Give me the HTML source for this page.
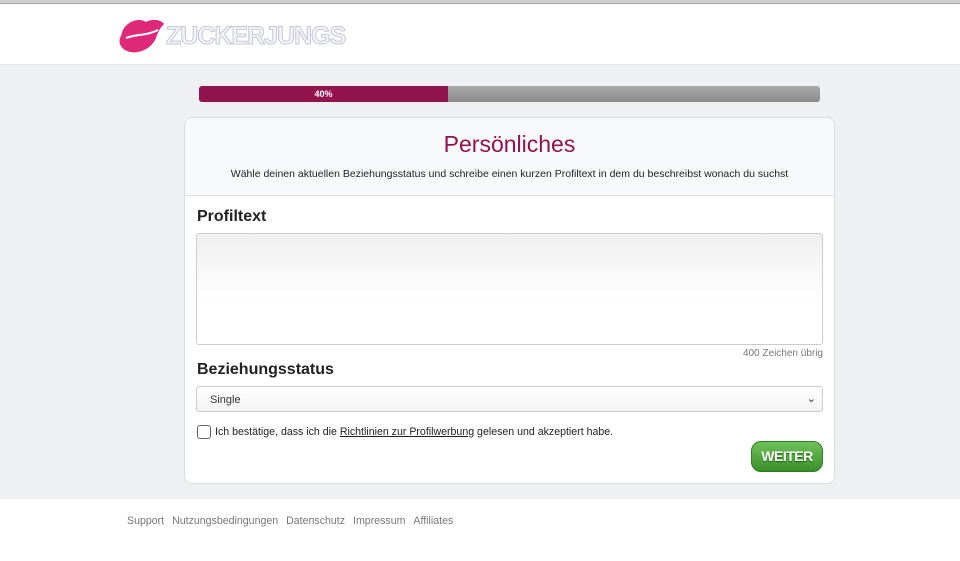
<!DOCTYPE html>
<html><head><meta charset="utf-8"><style>
*{box-sizing:border-box;margin:0;padding:0}
body{width:960px;height:561px;background:#fff;font-family:"Liberation Sans",sans-serif;position:relative;overflow:hidden}
.topline{position:absolute;left:0;top:0;width:960px;height:4px;background:#cfcfcf;border-bottom:1px solid #aaa}
.header{position:absolute;left:0;top:4px;width:960px;height:61px;background:#fff;border-bottom:1px solid #e6e6e6}
.gray{position:absolute;left:0;top:65px;width:960px;height:434px;background:#eff0f2}
.logo{position:absolute;left:118px;top:14px}
.logotext{position:absolute;left:166px;top:18px;font:bold 25px "Liberation Sans",sans-serif;color:#f4f5f8;-webkit-text-stroke:1px #c4c8d4;letter-spacing:-1px}
.prog{position:absolute;left:199px;top:86px;width:621px;height:16px;border-radius:3px;background:linear-gradient(#a8a8a8,#8a8a8a)}
.prog div{width:249px;height:16px;background:#93134f;border-radius:3px 0 0 3px;color:#fff;font:bold 9px "Liberation Sans",sans-serif;text-align:center;line-height:16px}
.card{position:absolute;left:184px;top:117px;width:651px;height:367px;background:#fff;border:1px solid #dcdcdc;border-radius:8px;overflow:hidden}
.ch{height:78px;background:#f8f9fa;border-bottom:1px solid #ddd;text-align:center}
.ch h1{font-weight:normal;font-size:23px;color:#93134f;padding-top:13px}
.ch p{font-size:10.5px;color:#222;margin-top:10px}
.lbl{position:absolute;left:12px;font-weight:bold;font-size:16px;color:#222}
.ta{position:absolute;left:11px;top:115px;width:627px;height:112px;border:1px solid #ccc;border-radius:3px;background:linear-gradient(#efefef,#fff 60%)}
.cnt{position:absolute;right:11px;top:230px;font-size:10px;color:#777}
.sel{position:absolute;left:11px;top:268px;width:627px;height:26px;border:1px solid #ccc;border-radius:3px;background:linear-gradient(#fff,#f3f3f3);font-size:11px;color:#333;padding:7px 13px}
.cb{position:absolute;left:12px;top:307px;width:14px;height:14px;border:1px solid #666;border-radius:3px}
.ct{position:absolute;left:30px;top:308px;font-size:10.6px;color:#222}
.ct u{color:#222}
.btn{position:absolute;left:566px;top:323px;width:72px;height:31px;border-radius:10px;background:linear-gradient(#6fc25a,#3a8f2b);border:1px solid #2f7d24;color:#fff;font-weight:bold;font-size:14px;letter-spacing:-0.5px;text-align:center;line-height:29px;text-shadow:0 1px 1px #1d5a15}
.foot{position:absolute;left:127px;top:515px;font-size:10.6px;color:#777}
.foot span{margin-right:8px}
</style></head><body>
<div class="topline"></div>
<div class="header">
<svg class="logo" width="46" height="36" viewBox="0 0 46 36"><path d="M6 10 C12 2 22 0 28 4 C34 0 44 2 46 6 C42 10 40 14 38 20 C34 30 22 36 12 34 C4 32 0 26 2 20 C4 16 4 13 6 10 Z" fill="#e0287a"/><path d="M8 20 C18 16 28 18 40 12" stroke="#fff" stroke-width="2" fill="none"/></svg>
<div class="logotext">ZUCKERJUNGS</div>
</div>
<div class="gray"></div>
<div class="prog"><div>40%</div></div>
<div class="card">
<div class="ch"><h1>Persönliches</h1><p>Wähle deinen aktuellen Beziehungsstatus und schreibe einen kurzen Profiltext in dem du beschreibst wonach du suchst</p></div>
<div class="lbl" style="top:90px">Profiltext</div>
<div class="ta"></div>
<div class="cnt">400 Zeichen übrig</div>
<div class="lbl" style="top:243px">Beziehungsstatus</div>
<div class="sel">Single<span style="position:absolute;right:6px;top:5px;font-size:11px">&#8964;</span></div>
<div class="cb"></div>
<div class="ct">Ich bestätige, dass ich die <u>Richtlinien zur Profilwerbung</u> gelesen und akzeptiert habe.</div>
<div class="btn">WEITER</div>
</div>
<div class="foot"><span>Support</span><span>Nutzungsbedingungen</span><span>Datenschutz</span><span>Impressum</span><span>Affiliates</span></div>
</body></html>
